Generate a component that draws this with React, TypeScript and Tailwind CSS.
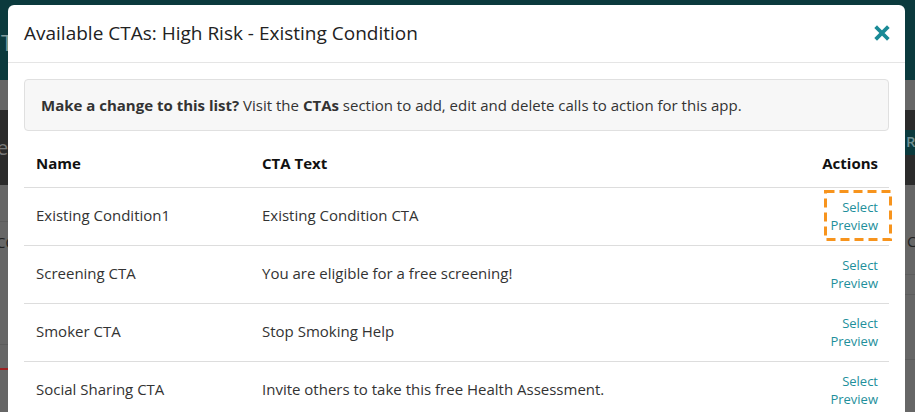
import React from 'react';

const ROWS = [
  { name: 'Existing Condition1', text: 'Existing Condition CTA' },
  { name: 'Screening CTA', text: 'You are eligible for a free screening!' },
  { name: 'Smoker CTA', text: 'Stop Smoking Help' },
  { name: 'Social Sharing CTA', text: 'Invite others to take this free Health Assessment.' },
];

const Backdrop: React.FC = () => (
  <div className="flex flex-col w-full h-full text-[#9aa] text-[18px]">
    <div className="h-[80px] bg-[#0b3a3d] flex items-center pl-[1px] pt-[4px] text-[#7f9a9c] text-[22px]">T</div>
    <div className="h-[30px] bg-[#666666]" />
    <div className="h-[75px] bg-[#2b2b2b] flex">
      <div className="flex-1 flex items-center text-[#777] text-[20px] -ml-[3px]">e</div>
      <div className="w-[10px] flex flex-col">
        <div className="h-[20px]" />
        <div className="h-[25px] bg-[#0b3a3d] text-[#6f8f92] text-[15px] font-semibold pl-[1px]">Re</div>
      </div>
    </div>
    <div className="flex-1 bg-[#666666] flex">
      <div className="flex-1 flex flex-col">
        <div className="h-[37px] border-b border-[#5c5c5c]" />
        <div className="h-[40px] flex items-center text-[#222] text-[15px] -ml-[4px]">CC</div>
        <div className="h-[83px] border-b border-[#5c5c5c]" />
        <div className="h-[47px] flex items-center">
          <div className="w-[10px] h-[2px] bg-[#9b2020]" />
        </div>
      </div>
      <div className="w-[10px] flex flex-col">
        <div className="h-[45px]" />
        <div className="h-[20px] text-[#222] text-[15px] pl-[2px]">C</div>
        <div className="h-[25px] border-b border-[#5c5c5c]" />
        <div className="h-[20px] border-b border-[#5c5c5c]" />
        <div className="h-[65px] border-b border-[#5c5c5c]" />
      </div>
    </div>
  </div>
);

const Actions: React.FC<{ highlight?: boolean }> = ({ highlight }) => (
  <div className="relative inline-flex flex-col items-end text-[13px] leading-[18px] text-[#1e8f9b]">
    <span>Select</span>
    <span>Preview</span>
    {highlight && (
      <svg
        width="68"
        height="51"
        viewBox="0 0 68 51"
        className="absolute -left-[6px] -top-[8px] pointer-events-none"
      >
        <rect x="1.5" y="1.5" width="65" height="48" fill="none" stroke="#f7941d" strokeWidth="3" strokeDasharray="9 5" />
      </svg>
    )}
  </div>
);

export default function App() {
  return (
    <div
      className="relative w-[915px] h-[412px] overflow-hidden"
      style={{ fontFamily: '"Open Sans", "Noto Sans", sans-serif' }}
    >
      <Backdrop />
      <div className="absolute left-[8px] top-[5px] w-[897px] bottom-0 bg-white rounded-t-[6px] text-[#333]">
        <div className="h-[58px] flex items-center justify-between pl-4 pr-[16px] border-b border-[#e5e5e5]">
          <h1 className="text-[19px] text-[#222]">Available CTAs: High Risk - Existing Condition</h1>
          <svg width="16" height="16" viewBox="0 0 16 16" className="-mr-[1px] -mt-[2px]">
            <path d="M3 3 L13 13 M13 3 L3 13" stroke="#1a8a96" strokeWidth="3.8" strokeLinecap="square" />
          </svg>
        </div>
        <div className="px-4 pt-4">
          <div className="h-[52px] flex items-center px-4 bg-[#f7f7f7] border border-[#e0e0e0] rounded-[4px] text-[15px] text-[#333]">
            <p>
              <b>Make a change to this list?</b> Visit the <b>CTAs</b> section to add, edit and delete calls to action for this app.
            </p>
          </div>
          <table className="w-full mt-2 text-[15px] border-collapse">
            <thead>
              <tr className="h-[48px] border-b border-[#dddddd]">
                <th className="w-[238px] text-left pl-3 font-bold text-[#111]">Name</th>
                <th className="text-left font-bold text-[#111]">CTA Text</th>
                <th className="text-right pr-[11px] font-bold text-[#111]">Actions</th>
              </tr>
            </thead>
            <tbody>
              {ROWS.map((r, i) => (
                <tr key={r.name} className="h-[58px] border-b border-[#dddddd]">
                  <td className="pl-3 pb-[1px]">{r.name}</td>
                  <td className="pb-[1px]">{r.text}</td>
                  <td className="text-right pr-[11px] pb-[4px]">
                    <Actions highlight={i === 0} />
                  </td>
                </tr>
              ))}
            </tbody>
          </table>
        </div>
      </div>
    </div>
  );
}
